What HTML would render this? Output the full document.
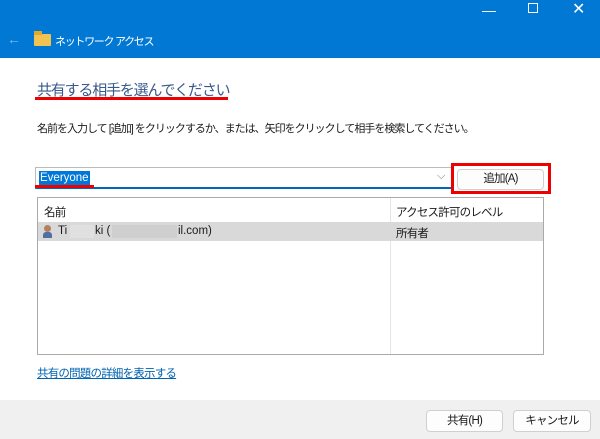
<!DOCTYPE html>
<html><head><meta charset="utf-8"><style>
*{margin:0;padding:0;box-sizing:border-box}
body{width:600px;height:439px;overflow:hidden;background:#fff;font-family:"Liberation Sans","Noto Sans CJK JP",sans-serif;font-size:11.5px;letter-spacing:-0.8px;color:#1a1a1a;position:relative}
.a{position:absolute}
.l{letter-spacing:0}
.btn{position:absolute;border:1px solid #d0d0d0;border-radius:4px;background:#fdfdfd;text-align:center;line-height:19px}
</style></head><body>
<div class="a" style="left:0;top:0;width:600px;height:58px;background:#0078d4"></div>
<div class="a" style="left:482px;top:2px;color:#fff;font-size:14px">—</div>
<div class="a" style="left:528px;top:3px;width:10px;height:10px;border:1px solid #fff"></div>
<div class="a" style="left:572px;top:-1px;color:#fff;font-size:16px">✕</div>
<div class="a" style="left:7px;top:31px;color:#8fb6e0;font-size:14px">←</div>
<div class="a" style="left:34px;top:34px;width:17px;height:12px;background:#f3c352;border-radius:1px"></div>
<div class="a" style="left:34px;top:31px;width:8px;height:4px;background:#e0a830"></div>
<div class="a" style="left:55px;top:33px;color:#fff;font-size:11px;letter-spacing:-1.3px">ネットワーク アクセス</div>
<div class="a" style="left:37px;top:79px;font-size:15px;letter-spacing:-1.2px;color:#3a5a8c">共有する相手を選んでください</div>
<div class="a" style="left:35px;top:97px;width:193px;height:3px;background:#e00"></div>
<div class="a" style="left:37px;top:120px;font-size:11px;letter-spacing:-1px">名前を入力して [追加] をクリックするか、または、矢印をクリックして相手を検索してください。</div>
<div class="a" style="left:35px;top:167px;width:418px;height:22px;border:1px solid #bbb;border-bottom:2px solid #0067c0"></div>
<div class="a l" style="left:39px;top:171px;background:#0078d7;color:#fff;padding:0 1px;line-height:14px">Everyone</div>
<div class="a" style="left:35px;top:185px;width:59px;height:3px;background:#e00"></div>
<div class="a" style="left:437px;top:170px;color:#777;font-size:11px">⌵</div>
<div class="a" style="left:451px;top:163px;width:100px;height:31px;border:3px solid #e00"></div>
<div class="btn" style="left:457px;top:169px;width:87px;height:21px">追加(A)</div>
<div class="a" style="left:37px;top:197px;width:507px;height:158px;border:1px solid #aaa"></div>
<div class="a" style="left:390px;top:198px;width:1px;height:156px;background:#e5e5e5"></div>
<div class="a" style="left:44px;top:204px">名前</div>
<div class="a" style="left:396px;top:204px">アクセス許可のレベル</div>
<div class="a" style="left:38px;top:222px;width:505px;height:19px;background:#d9d9d9"></div>
<div class="a" style="left:44px;top:225px;width:7px;height:7px;border-radius:50%;background:#b08060"></div>
<div class="a" style="left:43px;top:232px;width:9px;height:6px;background:#5070a0;border-radius:3px 3px 0 0"></div>
<div class="a l" style="left:58px;top:225px">Ti</div>
<div class="a" style="left:70px;top:225px;width:24px;height:13px;background:#e0e0e0"></div>
<div class="a l" style="left:95px;top:225px">ki (</div>
<div class="a" style="left:112px;top:225px;width:65px;height:13px;background:#cfcfcf"></div>
<div class="a l" style="left:178px;top:225px">il.com)</div>
<div class="a" style="left:396px;top:225px">所有者</div>
<div class="a" style="left:37px;top:365px;color:#0063b1;text-decoration:underline">共有の問題の詳細を表示する</div>
<div class="a" style="left:0;top:400px;width:600px;height:39px;background:#f0f0f0"></div>
<div class="btn" style="left:426px;top:410px;width:77px;height:22px;line-height:20px">共有(H)</div>
<div class="btn" style="left:513px;top:410px;width:78px;height:22px;line-height:20px">キャンセル</div>
</body></html>
